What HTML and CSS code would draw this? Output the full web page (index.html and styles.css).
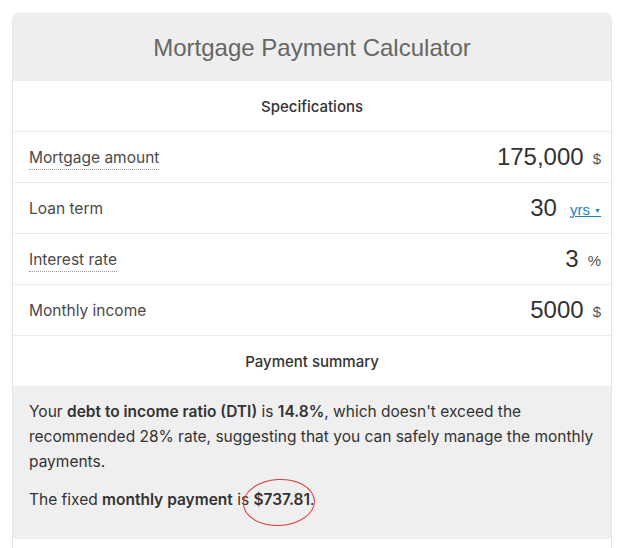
FILE: index.html
```html
<!DOCTYPE html>
<html>
<head>
<meta charset="utf-8">
<link rel="stylesheet" href="styles.css">
</head>
<body>
<div class="card">
  <div class="card-header">Mortgage Payment Calculator</div>
  <div class="section-title">Specifications</div>
  <div class="row">
    <span class="label dotted">Mortgage amount</span>
    <span class="value">175,000</span>
    <span class="unit">$</span>
  </div>
  <div class="row">
    <span class="label">Loan term</span>
    <span class="value">30</span>
    <span class="unit link">yrs <span class="caret">▼</span></span>
  </div>
  <div class="row">
    <span class="label dotted">Interest rate</span>
    <span class="value">3</span>
    <span class="unit">%</span>
  </div>
  <div class="row">
    <span class="label">Monthly income</span>
    <span class="value">5000</span>
    <span class="unit">$</span>
  </div>
  <div class="section-title">Payment summary</div>
  <div class="summary">
    <p>Your <b>debt to income ratio (DTI)</b> is <b>14.8%</b>, which doesn't exceed the recommended 28% rate, suggesting that you can safely manage the monthly payments.</p>
    <p>The fixed <b>monthly payment</b> is <span class="amount"><b>$737.81</b>.<span class="circle"></span></span></p>
  </div>
  <div class="footer"></div>
</div>
</body>
</html>
```
FILE: styles.css
```css
html, body {
  margin: 0;
  background: #ffffff;
}
body {
  padding: 13px 12px 0 12px;
  font-family: Inter, "Noto Sans", sans-serif;
  color: #333;
}
.card {
  width: 598px;
  border: 1px solid #e6e6e6;
  border-bottom: none;
  border-radius: 7px 7px 0 0;
  overflow: hidden;
}
.card-header {
  background: #eeeeee;
  height: 67px;
  display: flex;
  align-items: center;
  justify-content: center;
  font-family: "Liberation Sans", Arial, sans-serif;
  font-size: 24px;
  color: #666;
}
.section-title {
  height: 50px;
  display: flex;
  align-items: center;
  justify-content: center;
  font-size: 15px;
  font-weight: 500;
  color: #333;
  border-bottom: 1px solid #ececec;
}
.row {
  height: 50px;
  display: flex;
  align-items: center;
  padding: 0 10px 0 16px;
  border-bottom: 1px solid #ececec;
}
.label {
  font-size: 15.5px;
  color: #4a4a4a;
  margin-right: auto;
}
.label.dotted {
  border-bottom: 1px dotted #999;
  line-height: 22px;
  margin-top: 2px;
}
.value {
  font-family: "Liberation Sans", Arial, sans-serif;
  font-size: 24px;
  color: #333;
}
.unit {
  font-family: "Liberation Sans", Arial, sans-serif;
  font-size: 15px;
  color: #555;
  margin-left: 9px;
  margin-top: 2px;
}
.unit.link {
  color: #1b86c2;
  text-decoration: underline;
  font-size: 15px;
  margin-left: 13px;
}
.caret {
  font-size: 7px;
  vertical-align: 2px;
}
.summary {
  background: #efefef;
  padding: 12px 16px 14px 16px;
  font-size: 15.5px;
  line-height: 25px;
  color: #333;
}
.summary p {
  margin: 0 0 13px 0;
}
.summary b {
  font-weight: 600;
}
.amount {
  position: relative;
}
.circle {
  position: absolute;
  left: -10px;
  top: -11px;
  width: 70px;
  height: 45px;
  border: 1px solid #e03a3a;
  border-radius: 50%;
  transform: rotate(-3deg);
}
.footer {
  height: 12px;
  background: #fff;
}
```
